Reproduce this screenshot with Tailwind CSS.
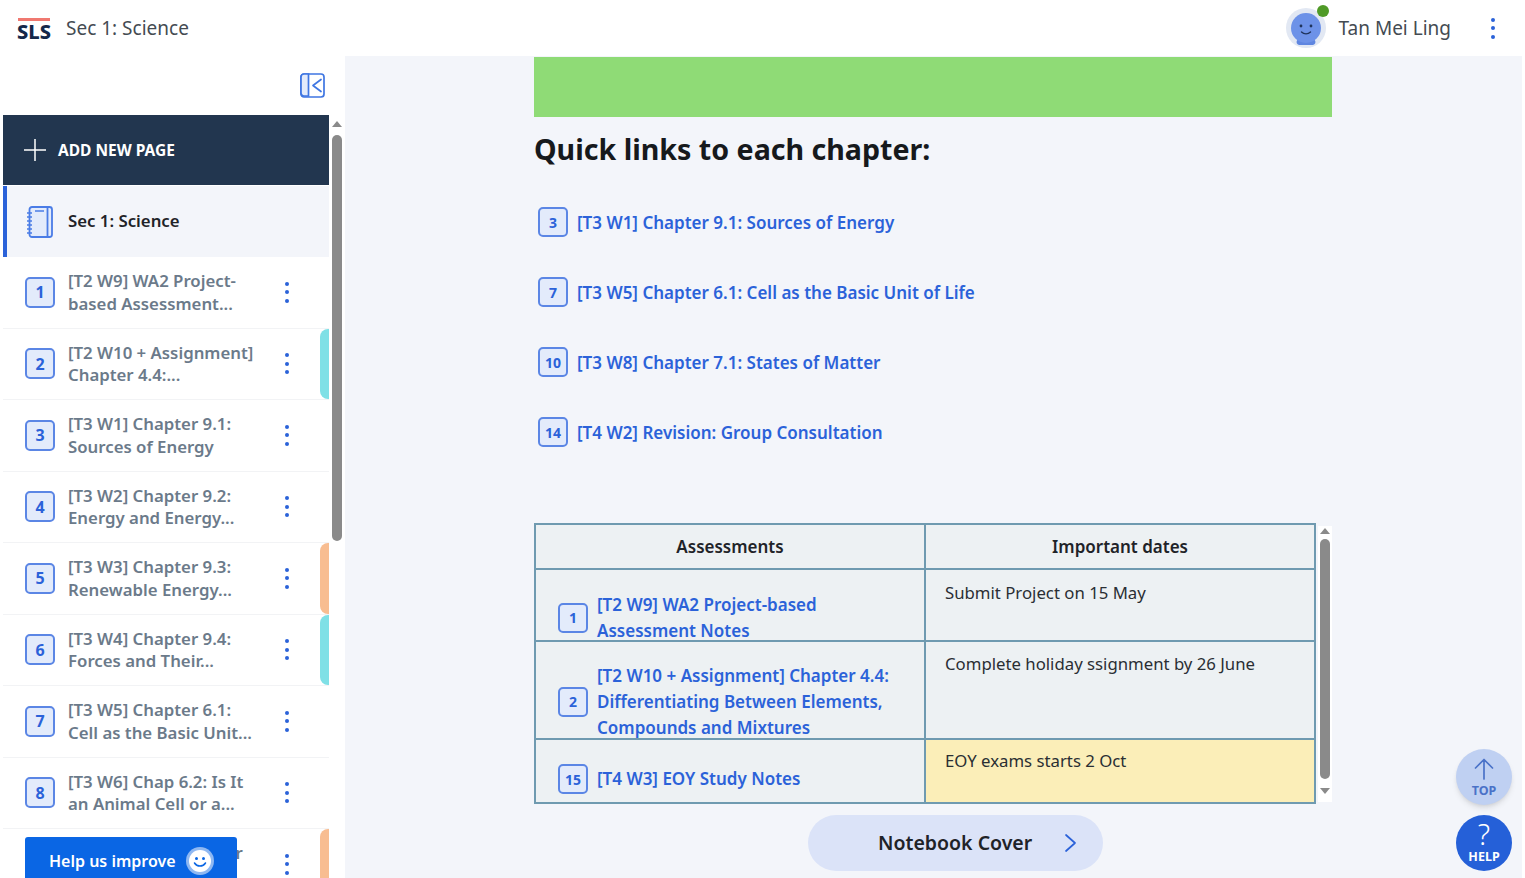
<!DOCTYPE html>
<html lang="en">

<head>
  <meta charset="UTF-8">
  <meta name="viewport" content="width=device-width, initial-scale=1.0">
  <title>Sec 1: Science</title>
  <script src="https://cdn.jsdelivr.net/npm/@tailwindcss/browser@4"></script>
</head>

<body class="bg-white font-['Noto_Sans',sans-serif]">
  <div class="relative h-[878px] w-[1525px] overflow-hidden pr-[3px]">

    <!-- top bar -->
    <header class="flex h-14 items-center bg-white pl-[17px] pr-[27px]">
      <div class="flex w-[49px] flex-col items-start pt-[3px]">
        <div class="ml-[1px] h-[3px] w-[32px] bg-[#f07870]"></div>
        <span class="mt-[1px] text-[20px] font-extrabold leading-[20px] text-[#14284a]">SLS</span>
      </div>
      <span class="pt-[1px] text-[19px] text-[#444b52]">Sec 1: Science</span>
      <div class="ml-auto flex items-center">
        <div class="relative mr-[13px] flex h-10 w-10 items-center justify-center rounded-full bg-[#e2e8f3]">
          <svg width="32" height="34" viewBox="0 0 32 34" class="mt-[2px]">
            <path d="M8 27c-2 2-2 5 1 6h14c3-1 3-4 1-6z" fill="#5f86e0" />
            <circle cx="16" cy="16" r="15" fill="#6d92e8" />
            <circle cx="11" cy="14" r="1.4" fill="#20345c" />
            <circle cx="21" cy="14" r="1.4" fill="#20345c" />
            <path d="M11.5 20c2.5 2.5 6.500 2.500 9 0" fill="none" stroke="#20345c" stroke-width="1.400" stroke-linecap="round" />
          </svg>
          <div class="absolute -right-[3px] -top-[3px] h-3 w-3 rounded-full bg-[#4f9a27]"></div>
        </div>
        <span class="pt-[1px] text-[19px] text-[#444b52]">Tan Mei Ling</span>
        <div class="ml-[40px] flex flex-col gap-[4.5px]">
          <div class="h-[4px] w-[4px] rounded-full bg-[#2b62d9]"></div>
          <div class="h-[4px] w-[4px] rounded-full bg-[#2b62d9]"></div>
          <div class="h-[4px] w-[4px] rounded-full bg-[#2b62d9]"></div>
        </div>
      </div>
    </header>

    <div class="flex h-[822px]">
      <!-- sidebar -->
      <aside class="flex w-[345px] shrink-0 flex-col overflow-hidden bg-white pl-[3px]">
        <div class="flex h-[59px] shrink-0 items-center justify-end pr-[20px]">
          <svg width="25" height="25" viewBox="0 0 25 25" fill="none" stroke="#3f76e2" stroke-width="1.700">
            <rect x="1" y="1" width="23" height="23" rx="3" fill="#ffffff" />
            <path d="M1 4a3 3 0 0 1 3-3h4.500v22H4a3 3 0 0 1-3-3z" fill="#e3ebfb" />
            <path d="M21 6.500l-8 6 8 6" stroke-linecap="round" stroke-linejoin="round" />
          </svg>
        </div>
        <div class="flex min-h-0 flex-1">
          <div class="w-[326px] shrink-0">
            <div class="flex h-[70px] items-center bg-[#22364f] pl-[21px] text-white">
              <svg width="22" height="22" viewBox="0 0 22 22" fill="none" stroke="#ffffff" stroke-width="1.500">
                <path d="M11 0v22M0 11h22" />
              </svg>
              <span class="ml-[12px] pt-[2px] text-[15.5px] font-bold">ADD NEW PAGE</span>
            </div>
            <div class="mt-[1px] flex h-[71px] items-center border-l-[4px] border-[#2b62d9] bg-[#f3f5fa] pl-[20px]">
              <svg width="26" height="32" viewBox="0 0 26 32" fill="none" stroke="#4a7ce6" stroke-width="1.800">
                <rect x="2.500" y="1" width="22.500" height="30" rx="2.500" fill="#e3ebfb" />
                <path d="M20.500 1v30" />
                <path d="M8 5h9" stroke-width="1.500" />
                <path d="M0 7h5M0 11h5M0 15h5M0 19h5M0 23h5M0 27h5" stroke-width="1.400" />
              </svg>
              <span class="ml-[15px] pb-[2px] text-[16.8px] font-semibold text-[#1f2328]">Sec 1: Science</span>
            </div>
            <div id="pages"></div>
          </div>
          <!-- sidebar scrollbar -->
          <div class="flex w-[16px] flex-col items-center pt-[6px]">
            <div class="h-0 w-0 border-x-[5px] border-b-[6px] border-x-transparent border-b-[#8a8a8a]"></div>
            <div class="mt-[8px] h-[406px] w-[10px] rounded-full bg-[#8a8a8a]"></div>
          </div>
        </div>
      </aside>

      <!-- main -->
      <main class="min-w-0 flex-1 bg-[#f3f5fa] pl-[189px]">
        <div class="mt-[1px] h-[60px] w-[798px] bg-[#8fdb76]"></div>
        <h1 class="mt-[12px] text-[28.6px] font-bold leading-[40px] text-[#16191c]">Quick links to each chapter:</h1>

        <div id="links" class="mt-[38px] flex flex-col gap-[40px] pl-[4px]"></div>

        <div class="mt-[76px] flex items-start">
          <table class="w-[782px] table-fixed border-collapse border-2 border-[#6f9ab0] bg-[#edf1f3]">
            <thead>
              <tr class="h-[45px]">
                <th class="border-2 border-[#6f9ab0] text-[17px] font-semibold text-[#1f2328]">Assessments</th>
                <th class="border-2 border-[#6f9ab0] text-[17px] font-semibold text-[#1f2328]">Important dates</th>
              </tr>
            </thead>
            <tbody class="text-[16.75px] text-[#2a2e33]">
              <tr>
                <td class="border-2 border-[#6f9ab0] p-0 align-top">
                  <div class="flex h-[70px] items-center gap-[9px] pl-[22px] pt-[25px]">
                    <span class="flex h-[30px] w-[30px] shrink-0 items-center justify-center rounded-[5px] border-2 border-[#5b86e5] bg-[#e3ebfb] text-[14px] font-bold text-[#2b62d9]">1</span>
                    <a class="text-[17px] font-semibold leading-[26px] text-[#2b62d9]">[T2 W9] WA2 Project-based<br>Assessment Notes</a>
                  </div>
                </td>
                <td class="border-2 border-[#6f9ab0] px-[19px] pt-[10px] align-top">Submit Project on 15 May</td>
              </tr>
              <tr>
                <td class="border-2 border-[#6f9ab0] p-0 align-top">
                  <div class="flex h-[96px] items-center gap-[9px] pl-[22px] pt-[23px]">
                    <span class="flex h-[30px] w-[30px] shrink-0 items-center justify-center rounded-[5px] border-2 border-[#5b86e5] bg-[#e3ebfb] text-[14px] font-bold text-[#2b62d9]">2</span>
                    <a class="text-[17px] font-semibold leading-[26px] text-[#2b62d9]">[T2 W10 + Assignment] Chapter 4.4:<br>Differentiating Between Elements,<br>Compounds and Mixtures</a>
                  </div>
                </td>
                <td class="border-2 border-[#6f9ab0] px-[19px] pt-[9px] align-top">Complete holiday ssignment by 26 June</td>
              </tr>
              <tr>
                <td class="border-2 border-[#6f9ab0] p-0 align-top">
                  <div class="flex h-[62px] items-center gap-[9px] pl-[22px] pt-[16px]">
                    <span class="flex h-[30px] w-[30px] shrink-0 items-center justify-center rounded-[5px] border-2 border-[#5b86e5] bg-[#e3ebfb] text-[14px] font-bold text-[#2b62d9]">15</span>
                    <a class="text-[17px] font-semibold leading-[26px] text-[#2b62d9]">[T4 W3] EOY Study Notes</a>
                  </div>
                </td>
                <td class="border-2 border-[#6f9ab0] bg-[#fbeeb8] px-[19px] pt-[8px] align-top">EOY exams starts 2 Oct</td>
              </tr>
            </tbody>
          </table>
          <!-- table scrollbar -->
          <div class="ml-[2px] mt-[3px] flex h-[276px] w-[14px] flex-col items-center bg-white pt-[2px]">
            <div class="h-0 w-0 border-x-[5px] border-b-[6px] border-x-transparent border-b-[#8a8a8a]"></div>
            <div class="mt-[5px] h-[240px] w-[10px] rounded-full bg-[#8a8a8a]"></div>
            <div class="mt-[9px] h-0 w-0 border-x-[5px] border-t-[6px] border-x-transparent border-t-[#8a8a8a]"></div>
          </div>
        </div>

        <div class="mt-[11px] flex w-[843px] justify-center">
          <button class="flex h-[56px] w-[295px] items-center justify-between rounded-full bg-[#dbe3f8] pl-[70px] pr-[25px] text-[19.5px] font-semibold text-[#1f2328]">
            Notebook Cover
            <svg width="14" height="20" viewBox="0 0 14 20" fill="none" stroke="#2b62d9" stroke-width="1.700">
              <path d="M2 2l9 8-9 8" stroke-linecap="round" stroke-linejoin="round" />
            </svg>
          </button>
        </div>
      </main>
    </div>

    <!-- floating buttons -->
    <div class="absolute bottom-0 left-[25px] flex h-[41px] w-[212px] items-center rounded-t-[3px] bg-[#0a66e4] pl-[24px] pt-[6px] text-white">
      <span class="text-base font-semibold">Help us improve</span>
      <div class="ml-[10px] flex h-[28px] w-[28px] items-center justify-center rounded-full bg-[#8fb8f2]">
        <svg width="22" height="22" viewBox="0 0 22 22">
          <circle cx="11" cy="11" r="11" fill="#ffffff" />
          <circle cx="7.500" cy="8.500" r="1.500" fill="#0a66e4" />
          <circle cx="14.500" cy="8.500" r="1.500" fill="#0a66e4" />
          <path d="M5.500 13c2.500 4 8.500 4 11 0" fill="none" stroke="#0a66e4" stroke-width="1.500" stroke-linecap="round" />
        </svg>
      </div>
    </div>

    <div class="absolute left-[1456px] top-[749px] flex h-[56px] w-[56px] flex-col items-center rounded-full bg-[#bfd0f2] pt-[9px] shadow-md">
      <svg width="20" height="22" viewBox="0 0 20 22" fill="none" stroke="#4a72c8" stroke-width="1.700">
        <path d="M10 21V2M1.500 10L10 1.500 18.500 10" stroke-linecap="round" stroke-linejoin="round" />
      </svg>
      <span class="mt-[3px] text-[12.5px] font-bold leading-[16px] text-[#4a72c8]">TOP</span>
    </div>
    <div class="absolute left-[1456px] top-[815px] flex h-[56px] w-[56px] flex-col items-center rounded-full bg-[#2560d8] pt-[3px] text-white">
      <span class="text-[29px] font-light leading-[31px]">?</span>
      <span class="text-[12.5px] font-bold leading-[16px]">HELP</span>
    </div>
  </div>

  <script>
    const pages = [
      { n: 1, a: '[T2 W9] WA2 Project-', b: 'based Assessment...', bar: '' },
      { n: 2, a: '[T2 W10 + Assignment]', b: 'Chapter 4.4:...', bar: 'bg-[#7fe0e6] rounded-l-lg' },
      { n: 3, a: '[T3 W1] Chapter 9.1:', b: 'Sources of Energy', bar: '' },
      { n: 4, a: '[T3 W2] Chapter 9.2:', b: 'Energy and Energy...', bar: '' },
      { n: 5, a: '[T3 W3] Chapter 9.3:', b: 'Renewable Energy...', bar: 'bg-[#f8bd91] rounded-l-lg' },
      { n: 6, a: '[T3 W4] Chapter 9.4:', b: 'Forces and Their...', bar: 'bg-[#7fe0e6] rounded-l-lg' },
      { n: 7, a: '[T3 W5] Chapter 6.1:', b: 'Cell as the Basic Unit...', bar: '' },
      { n: 8, a: '[T3 W6] Chap 6.2: Is It', b: 'an Animal Cell or a...', bar: '' },
      { n: 9, a: '[T3 W7] Chap 6.3: Our', b: 'Cells at Work...', bar: 'bg-[#f8bd91] rounded-l-lg' },
    ];

    document.getElementById('pages').innerHTML = pages.map((p) => `
      <div class="flex h-[71.5px] border-b border-[#f2f3f5]">
        <div class="flex min-w-0 flex-1 items-center pl-[22px]">
          <span class="flex h-[31px] w-[30px] shrink-0 items-center justify-center rounded-[5px] border-2 border-[#5b86e5] bg-[#e3ebfb] text-base font-bold text-[#2b62d9]">${p.n}</span>
          <div class="ml-[13px] w-[200px] shrink-0 whitespace-nowrap pt-[1px] text-[16.8px] font-semibold leading-[22.5px] text-[#6b7a8a]">${p.a}<br>${p.b}</div>
          <div class="ml-[17px] flex flex-col gap-[4.5px]">
            <div class="h-[4px] w-[4px] rounded-full bg-[#2b62d9]"></div>
            <div class="h-[4px] w-[4px] rounded-full bg-[#2b62d9]"></div>
            <div class="h-[4px] w-[4px] rounded-full bg-[#2b62d9]"></div>
          </div>
        </div>
        <div class="w-[9px] shrink-0 ${p.bar}"></div>
      </div>`).join('');

    const links = [
      { n: 3, t: '[T3 W1] Chapter 9.1: Sources of Energy' },
      { n: 7, t: '[T3 W5] Chapter 6.1: Cell as the Basic Unit of Life' },
      { n: 10, t: '[T3 W8] Chapter 7.1: States of Matter' },
      { n: 14, t: '[T4 W2] Revision: Group Consultation' },
    ];

    document.getElementById('links').innerHTML = links.map((l) => `
      <a class="flex h-[30px] items-center gap-[9px] text-[17px] font-semibold text-[#2b62d9]">
        <span class="flex h-[30px] w-[30px] shrink-0 items-center justify-center rounded-[5px] border-2 border-[#5b86e5] bg-[#e3ebfb] text-[14px] font-bold">${l.n}</span>
        <span class="pt-[2px]">${l.t}</span>
      </a>`).join('');
  </script>
</body>

</html>
